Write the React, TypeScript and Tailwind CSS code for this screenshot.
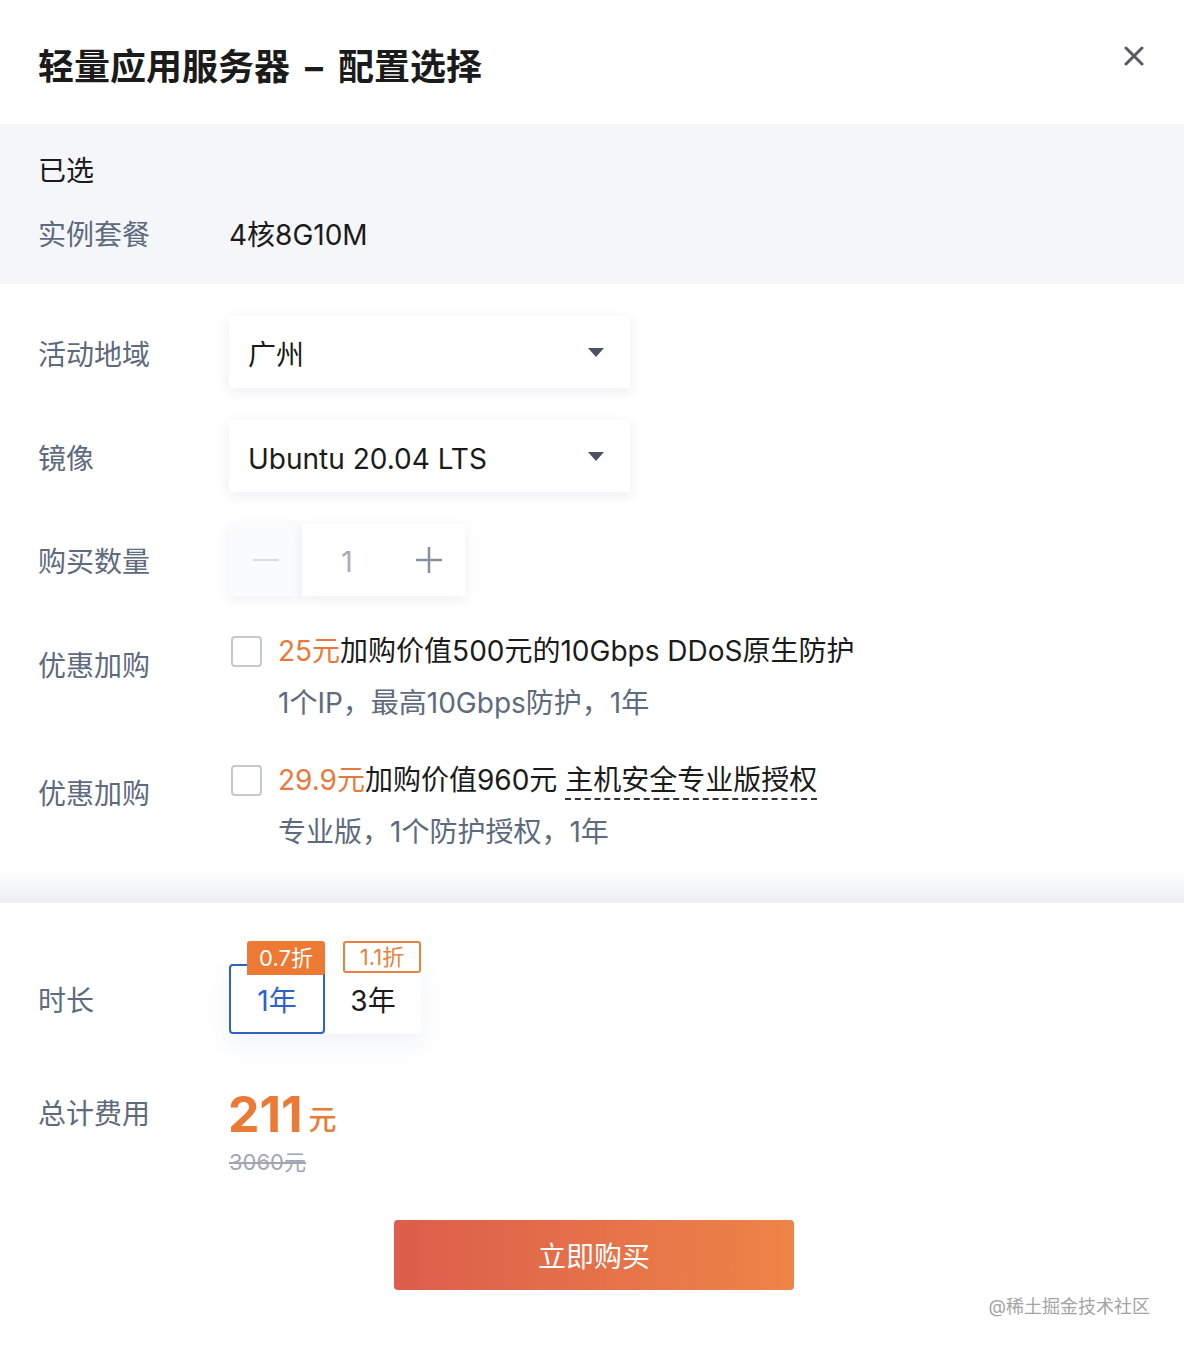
import { useState } from 'react';

const font = { fontFamily: 'Inter, "Noto Sans CJK SC", sans-serif' };

function Caret() {
  return (
    <svg width="16" height="9" viewBox="0 0 16 9" className="shrink-0">
      <path d="M0 0 L16 0 L8 9 Z" fill="#4b5263" />
    </svg>
  );
}

function Checkbox() {
  return <span className="block w-[31px] h-[31px] shrink-0 rounded-[4px] border-2 border-[#c4c8cf] bg-white" />;
}

export default function App() {
  const [years, setYears] = useState(1);
  const [count, setCount] = useState(1);

  return (
    <div className="relative w-[1184px] h-[1348px] bg-white text-[#1b1b1b] overflow-hidden" style={font}>
      {/* 标题 */}
      <div className="h-[124px] flex items-center justify-between pl-[38px] pr-[40px]">
        <h1 className="text-[36px] font-bold pt-[10px]">
          轻量应用服务器<span className="mx-[15px]">–</span>配置选择
        </h1>
        <button className="mb-[12px] text-[#555a63]">
          <svg width="20" height="20" viewBox="0 0 20 20">
            <path d="M2 2 L18 18 M18 2 L2 18" stroke="currentColor" strokeWidth="3" strokeLinecap="round" />
          </svg>
        </button>
      </div>

      {/* 已选 */}
      <div className="h-[160px] bg-[#f4f6f9] pl-[38px] pt-[25px] text-[28px]">
        <div className="h-[44px] flex items-center">已选</div>
        <div className="mt-[20px] h-[44px] flex items-center">
          <span className="w-[191px] text-[#5e6a7d]">实例套餐</span>
          <span>4核8G10M</span>
        </div>
      </div>

      {/* 配置 */}
      <div className="pl-[38px] pt-[32px] flex flex-col gap-[32px] text-[28px]">
        <div className="flex items-center h-[72px]">
          <span className="w-[191px] pt-[5px] text-[#5e6a7d]">活动地域</span>
          <div className="w-[401px] h-[72px] flex items-center justify-between pl-[19px] pr-[26px] bg-white shadow-[0_3px_12px_rgba(30,40,70,0.09)]">
            <span className="pt-[6px]">广州</span>
            <Caret />
          </div>
        </div>
        <div className="flex items-center h-[72px]">
          <span className="w-[191px] pt-[5px] text-[#5e6a7d]">镜像</span>
          <div className="w-[401px] h-[72px] flex items-center justify-between pl-[19px] pr-[26px] bg-white shadow-[0_3px_12px_rgba(30,40,70,0.09)]">
            <span className="pt-[6px]">Ubuntu 20.04 LTS</span>
            <Caret />
          </div>
        </div>
        <div className="flex items-center h-[72px]">
          <span className="w-[191px] pt-[4px] text-[#5e6a7d]">购买数量</span>
          <div className="flex h-[72px]">
            <button
              onClick={() => setCount(Math.max(1, count - 1))}
              className="w-[73px] h-full flex items-center justify-center bg-[#fafbfc] shadow-[0_3px_12px_rgba(30,40,70,0.07)]"
            >
              <span className="block w-[26px] h-[2px] bg-[#d9dde3]" />
            </button>
            <div className="flex bg-white shadow-[0_3px_12px_rgba(30,40,70,0.08)]">
              <span className="w-[90px] pt-[3px] flex items-center justify-center text-[#a8aeb8]">{count}</span>
              <button onClick={() => setCount(count + 1)} className="w-[73px] flex items-center justify-center text-[#8791a2]">
                <svg width="26" height="26" viewBox="0 0 26 26">
                  <path d="M13 0 V26 M0 13 H26" stroke="currentColor" strokeWidth="2.5" />
                </svg>
              </button>
            </div>
          </div>
        </div>

        {/* 优惠加购 */}
        <div className="flex">
          <span className="w-[191px] h-[72px] pt-[3px] flex items-center text-[#5e6a7d]">优惠加购</span>
          <div className="flex flex-col">
            <div className="h-[46px] flex items-center gap-[16px]">
              <span className="ml-[2px]"><Checkbox /></span>
              <span><span className="text-[#e8793a]">25元</span>加购价值500元的10Gbps DDoS原生防护</span>
            </div>
            <div className="mt-[6px] h-[46px] flex items-center pl-[49px] text-[#5e6a7d]">1个IP，最高10Gbps防护，1年</div>
          </div>
        </div>
        <div className="flex -mt-[1px]">
          <span className="w-[191px] h-[72px] pt-[1px] flex items-center text-[#5e6a7d]">优惠加购</span>
          <div className="flex flex-col">
            <div className="h-[46px] flex items-center gap-[16px]">
              <span className="ml-[2px]"><Checkbox /></span>
              <span>
                <span className="text-[#e8793a]">29.9元</span>加购价值960元{' '}
                <span className="border-b-2 border-dashed border-[#333] pb-[1px]">主机安全专业版授权</span>
              </span>
            </div>
            <div className="mt-[6px] h-[46px] flex items-center pl-[49px] text-[#5e6a7d]">专业版，1个防护授权，1年</div>
          </div>
        </div>
      </div>

      {/* 分隔 */}
      <div className="mt-[16px] h-[32px] bg-gradient-to-b from-white to-[#ebeef3]" />

      {/* 时长 & 费用 */}
      <div className="pl-[38px] pt-[61px] text-[28px]">
        <div className="flex items-center h-[70px]">
          <span className="w-[191px] pt-[3px] text-[#5e6a7d]">时长</span>
          <div className="flex shadow-[0_10px_24px_rgba(60,90,160,0.08)]">
            {[
              { y: 1, tag: '0.7折' },
              { y: 3, tag: '1.1折' },
            ].map((o) => {
              const active = years === o.y;
              return (
                <button
                  key={o.y}
                  onClick={() => setYears(o.y)}
                  className={`relative w-[96px] h-[70px] pt-[4px] flex items-center justify-center rounded-[4px] ${
                    active ? 'border-2 border-[#2d62c8] text-[#2d62c8] bg-white' : 'bg-white text-[#1b1b1b]'
                  }`}
                >
                  {o.y}年
                  <span
                    className={`absolute w-[78px] flex items-center justify-center text-[22px] rounded-[3px] ${
                      active
                        ? '-top-[25px] h-[34px] -right-[2px] bg-[#ec7a34] text-white rounded-bl-none'
                        : '-top-[23px] h-[32px] right-0 border-2 border-[#e9813f] bg-white text-[#e9813f]'
                    }`}
                  >
                    {o.tag}
                  </span>
                </button>
              );
            })}
          </div>
        </div>

        <div className="flex mt-[42px]">
          <span className="w-[191px] h-[72px] pt-[3px] flex items-center text-[#5e6a7d]">总计费用</span>
          <div className="flex flex-col">
            <div className="h-[72px] flex items-center pt-[4px]">
              <span className="text-[50px] font-bold text-[#ea7a36] leading-none -ml-[1px]">211</span>
              <span className="text-[28px] text-[#ea7a36] ml-[6px] mt-[12px] font-medium">元</span>
            </div>
            <div className="h-[28px] flex items-center text-[22px] text-[#a0a6b0] line-through">3060元</div>
          </div>
        </div>
      </div>

      <div className="flex justify-center mt-[44px] pl-[4px]">
        <button className="w-[400px] h-[70px] pt-[3px] rounded-[4px] bg-gradient-to-r from-[#dc5d4b] to-[#ee8447] text-white text-[28px]">
          立即购买
        </button>
      </div>

      <span className="absolute right-[34px] top-[1293px] text-[18px] text-[#a3a3a3]">@稀土掘金技术社区</span>
    </div>
  );
}
